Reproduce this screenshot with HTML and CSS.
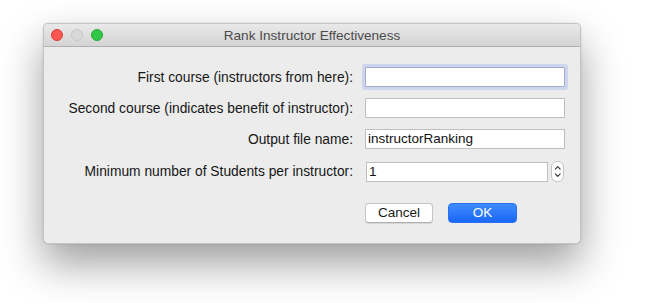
FILE: index.html
```html
<!DOCTYPE html>
<html>
<head>
<meta charset="utf-8">
<link rel="stylesheet" href="styles.css">
</head>
<body>
<div class="window">
  <div class="titlebar">
    <div class="lights">
      <span class="light red"></span>
      <span class="light gray"></span>
      <span class="light green"></span>
    </div>
    <div class="title">Rank Instructor Effectiveness</div>
  </div>
  <div class="content">
    <div class="form">
      <label class="lbl r1">First course (instructors from here):</label>
      <div class="field focus"></div>
      <label class="lbl r2">Second course (indicates benefit of instructor):</label>
      <div class="field"></div>
      <label class="lbl r3">Output file name:</label>
      <div class="field">instructorRanking</div>
      <label class="lbl r4">Minimum number of Students per instructor:</label>
      <div class="spin-row">
        <div class="field short">1</div>
        <div class="stepper">
          <svg width="12" height="21" viewBox="0 0 12 21">
            <path d="M3.5 8 L6 5.5 L8.5 8" fill="none" stroke="#333" stroke-width="1.2" stroke-linecap="round" stroke-linejoin="round"/>
            <path d="M3.5 13 L6 15.5 L8.5 13" fill="none" stroke="#333" stroke-width="1.2" stroke-linecap="round" stroke-linejoin="round"/>
          </svg>
        </div>
      </div>
    </div>
    <div class="buttons">
      <button class="btn cancel">Cancel</button>
      <button class="btn ok">OK</button>
    </div>
  </div>
</div>
</body>
</html>
```
FILE: styles.css
```css
html, body {
  margin: 0;
  padding: 0;
  background: #ffffff;
  font-family: "Liberation Sans", Arial, sans-serif;
}
body {
  padding: 23px 0 0 43px;
  height: 303px;
  box-sizing: border-box;
  overflow: hidden;
}
.window {
  width: 538px;
  height: 221px;
  box-sizing: border-box;
  background: #ececec;
  border-radius: 5px;
  border: 1px solid #c4c4c4;
  box-shadow: 0 20px 42px rgba(0,0,0,0.38), 0 0 2px rgba(0,0,0,0.15);
  overflow: hidden;
  display: flex;
  flex-direction: column;
}
.titlebar {
  height: 22px;
  flex: none;
  background: linear-gradient(#e9e9e9, #d4d4d4);
  border-bottom: 1px solid #b1b1b1;
  position: relative;
  display: flex;
  align-items: center;
  justify-content: center;
}
.lights {
  position: absolute;
  left: 7px;
  top: 5px;
  display: flex;
  gap: 8px;
}
.light {
  width: 12px;
  height: 12px;
  border-radius: 50%;
  box-sizing: border-box;
}
.red { background: #fc5753; border: 1px solid #df3d39; }
.gray { background: #d8d8d8; border: 1px solid #c6c6c6; }
.green { background: #33c748; border: 1px solid #27aa35; }
.title {
  font-size: 13.6px;
  color: #4b4b4b;
}
.content {
  padding: 20px 0 0 0;
}
.form {
  display: grid;
  grid-template-columns: 309px auto;
  column-gap: 12px;
  row-gap: 11px;
  align-items: center;
}
.lbl {
  text-align: right;
  font-size: 13.8px;
  color: #161616;
}
.field {
  width: 200px;
  height: 20px;
  box-sizing: border-box;
  background: #fff;
  border: 1px solid #bebebe;
  font-size: 13.5px;
  line-height: 18px;
  padding-left: 2px;
  color: #111;
}
.field.focus {
  border-color: #a3abc8;
  box-shadow: 0 0 0 3px #cdd6ec;
  border-radius: 1px;
}
.spin-row {
  display: flex;
  align-items: center;
  gap: 3px;
  margin-top: 1px;
}
.field.short {
  width: 182px;
  margin-left: 1px;
}
.stepper {
  width: 13px;
  height: 21px;
  box-sizing: border-box;
  border: 1px solid #c3c3c3;
  border-radius: 6px;
  background: #fff;
  display: flex;
}
.stepper svg { display: block; margin-left: -0.5px; margin-top: -1px; }
.buttons {
  display: flex;
  gap: 15px;
  padding-left: 321px;
  margin-top: 21px;
}
.btn {
  height: 20px;
  box-sizing: border-box;
  font-family: "Liberation Sans", Arial, sans-serif;
  font-size: 13.5px;
  border-radius: 4px;
  padding: 0;
  line-height: 18px;
}
.cancel {
  width: 68px;
  background: #fff;
  border: 1px solid #c6c6c6;
  border-bottom-color: #b0b0b0;
  color: #1a1a1a;
  box-shadow: 0 0.5px 1px rgba(0,0,0,0.1);
}
.ok {
  width: 69px;
  background: linear-gradient(#3f8cfc, #1a67f9);
  border: 1px solid #2a6ff5;
  color: #fff;
}
```
